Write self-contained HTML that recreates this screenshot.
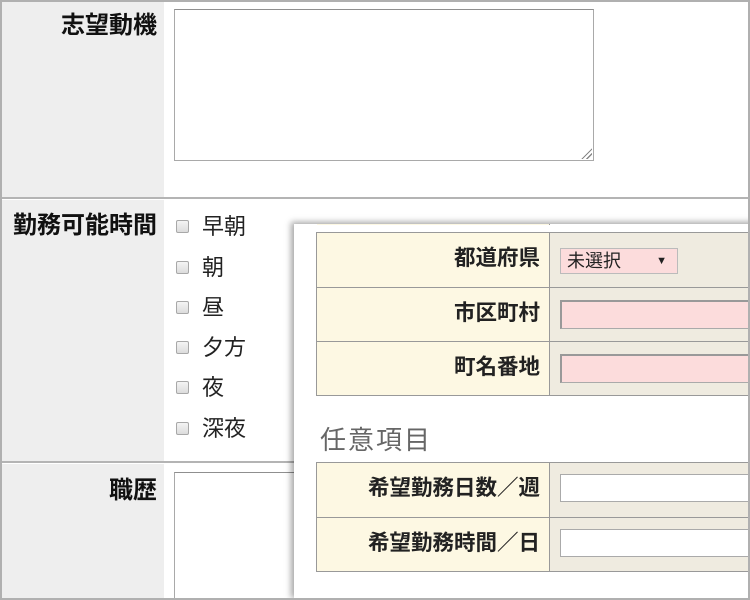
<!DOCTYPE html>
<html style="width:750px;height:600px;overflow:hidden"><head><meta charset="utf-8"><style>
*{box-sizing:border-box;margin:0;padding:0}
body{width:750px;height:600px;overflow:hidden;background:#fff;position:relative;font-family:"Liberation Sans","Noto Sans CJK JP",sans-serif}
.frame{position:absolute;left:0;top:0;width:750px;height:600px;border:2px solid #b0b0b0;z-index:10;pointer-events:none}
.lc{position:absolute;left:2px;width:162px;background:#eeeeee}
.lbl{position:absolute;right:593px;font-size:24px;font-weight:bold;color:#111;text-align:right;white-space:nowrap;line-height:28px}
.hr{position:absolute;left:0;width:750px;height:2px;background:#b4b4b4}
.ta{position:absolute;border:1px solid #a9a9a9;border-top-color:#8f8f8f;background:#fff}
.cb{position:absolute;left:176px;width:13px;height:13px;border:1px solid #a8a8a8;border-radius:2px;background:linear-gradient(#f4f4f4,#dcdcdc)}
.ct{position:absolute;left:202px;font-size:22px;color:#222;line-height:26px}
.ov{position:absolute;left:294px;top:224px;width:470px;height:376px;background:#fff;box-shadow:-3px -2px 6px rgba(0,0,0,.35);overflow:hidden}
.tb{position:absolute;left:22px;width:440px;border:1px solid #999;background:#efebe0}
.row{position:relative;height:54px;border-top:1px solid #999}
.row:first-child{border-top:none}
.k{position:absolute;left:0;top:0;width:233px;height:100%;background:#fdf8e3;border-right:1px solid #999;font-size:21.5px;font-weight:bold;color:#222;text-align:right;padding-right:9px;line-height:50px;white-space:nowrap}
.in{position:absolute;left:243px;top:12px;width:220px;height:29px;border:1px solid #aaa;border-top:2px solid #999;border-left:2px solid #999;background:#fcdcdc}
.inw{background:#fff;border:1px solid #aaa;top:11px;height:28px}
</style></head><body>
<div class="lc" style="top:2px;height:196px"></div>
<div class="lc" style="top:200px;height:262px"></div>
<div class="lc" style="top:464px;height:136px"></div>
<div class="hr" style="top:197px"></div>
<div class="hr" style="top:461px"></div>
<div class="lbl" style="top:12px">志望動機</div>
<div class="lbl" style="top:212px">勤務可能時間</div>
<div class="lbl" style="top:477px">職歴</div>
<div class="ta" style="left:174px;top:9px;width:420px;height:152px"></div>
<div style="position:absolute;left:580px;top:147px;width:12px;height:12px;background:linear-gradient(135deg,transparent 55%,#888 55%,#888 62%,transparent 62%,transparent 75%,#888 75%,#888 82%,transparent 82%)"></div>
<div class="ta" style="left:174px;top:472px;width:420px;height:128px"></div>
<div class="cb" style="top:220px"></div><div class="ct" style="top:214px">早朝</div>
<div class="cb" style="top:261px"></div><div class="ct" style="top:255px">朝</div>
<div class="cb" style="top:301px"></div><div class="ct" style="top:295px">昼</div>
<div class="cb" style="top:341px"></div><div class="ct" style="top:335px">夕方</div>
<div class="cb" style="top:381px"></div><div class="ct" style="top:375px">夜</div>
<div class="cb" style="top:422px"></div><div class="ct" style="top:416px">深夜</div>
<div class="ov">
 <div class="tb" style="top:-10px;height:10px;border-bottom:none"><div class="k" style="height:10px"></div></div>
 <div class="tb" style="top:8px">
  <div class="row"><div class="k">都道府県</div>
   <div style="position:absolute;left:243px;top:15px;width:118px;height:26px;border:1px solid #bbb;background:#fcdcdc;font-size:18px;line-height:24px;padding-left:6px;color:#222">未選択<span style="position:absolute;right:10px;font-size:11px">▼</span></div></div>
  <div class="row"><div class="k">市区町村</div><div class="in"></div></div>
  <div class="row"><div class="k">町名番地</div><div class="in"></div></div>
 </div>
 <div style="position:absolute;left:26px;top:196px;font-size:26px;color:#666;letter-spacing:2px">任意項目</div>
 <div class="tb" style="top:238px">
  <div class="row"><div class="k">希望勤務日数／週</div><div class="in inw"></div></div>
  <div class="row"><div class="k">希望勤務時間／日</div><div class="in inw"></div></div>
 </div>
</div>
<div class="frame"></div>
</body></html>
